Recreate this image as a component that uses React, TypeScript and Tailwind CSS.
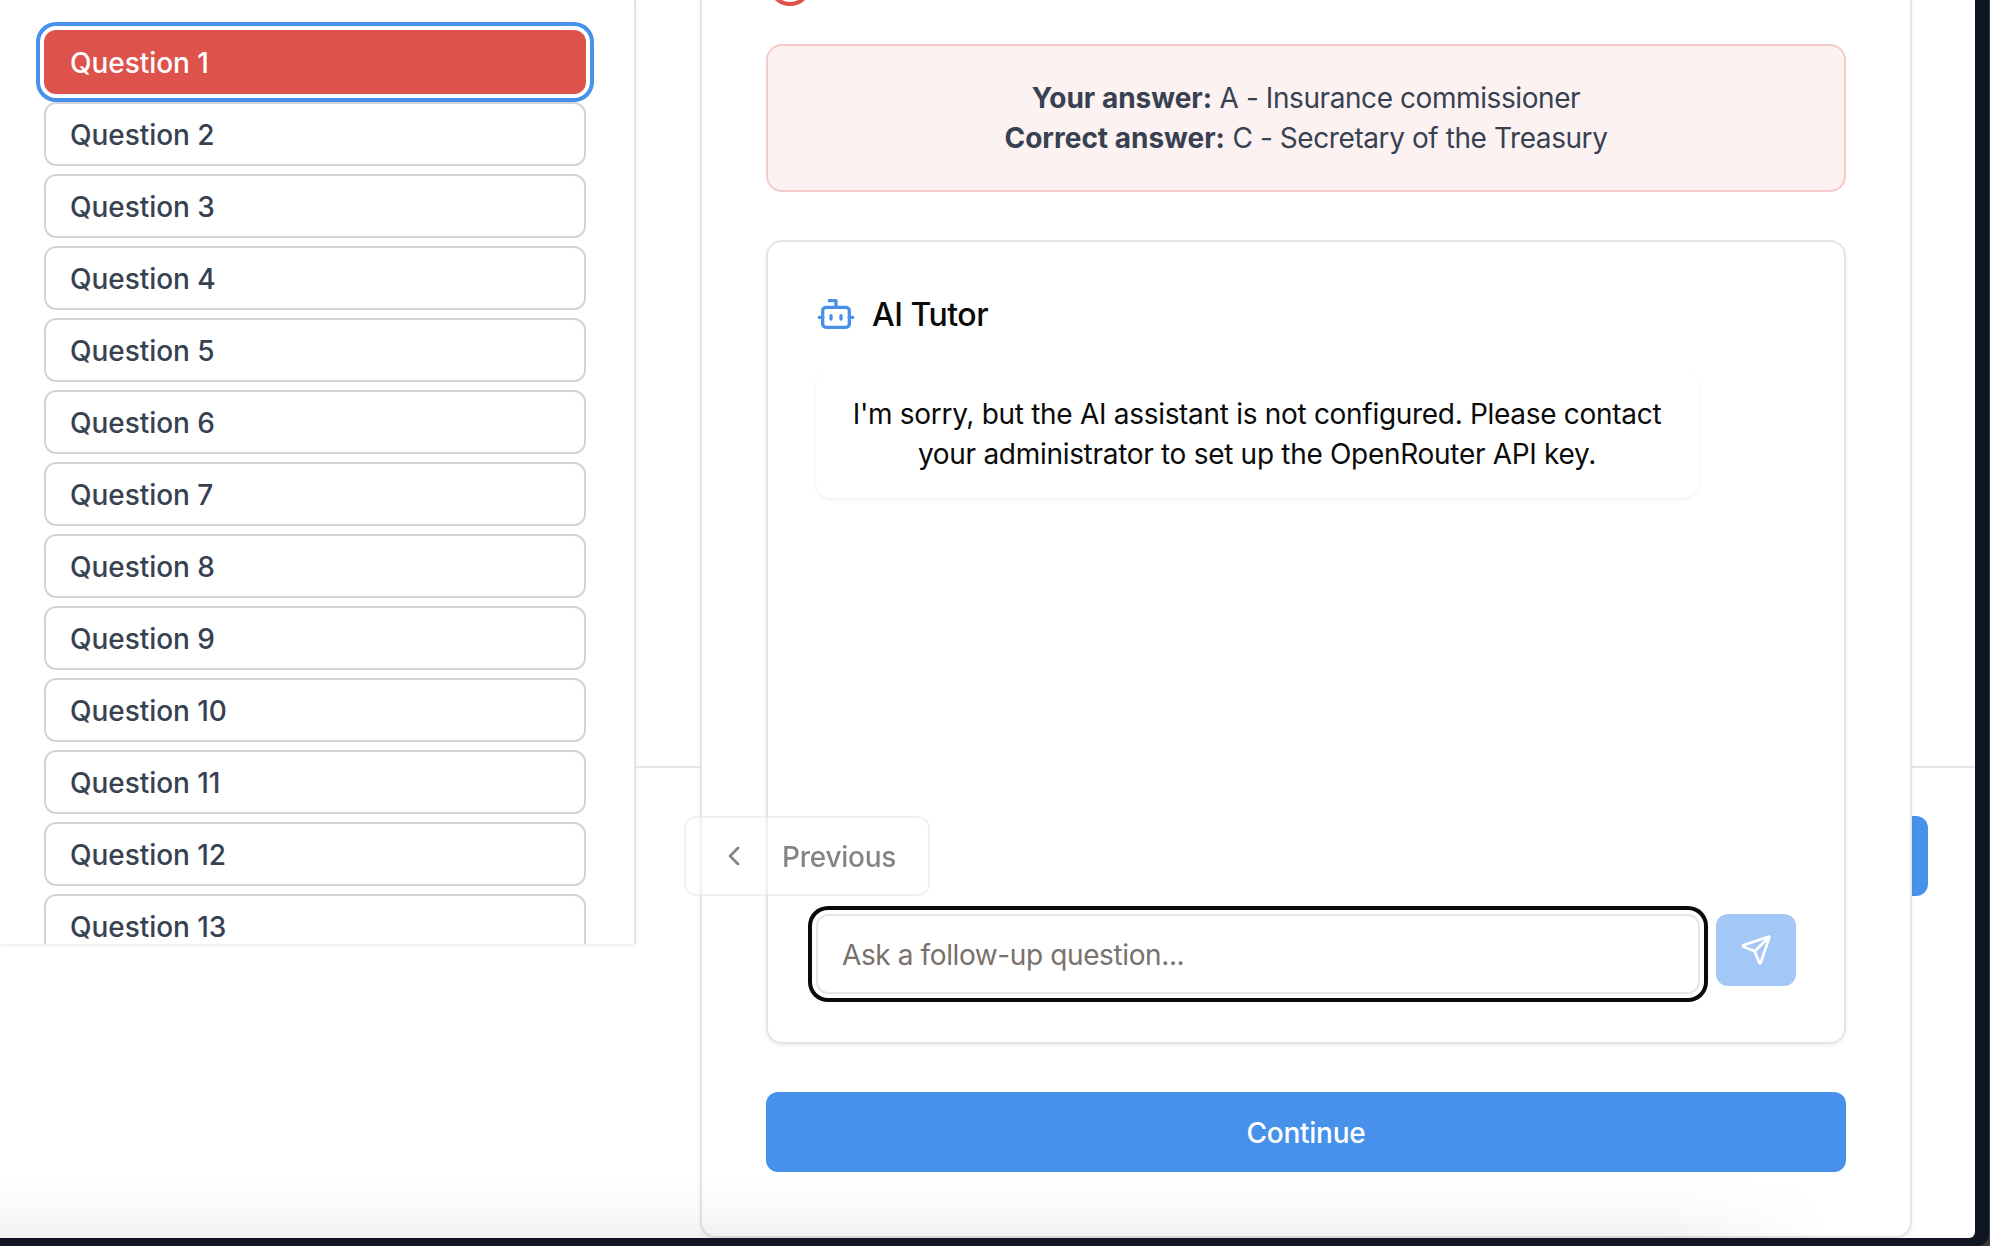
import { Bot, ChevronLeft, CircleX, Send } from "lucide-react";

const questions = Array.from({ length: 13 }, (_, i) => i + 1);

function Sidebar() {
  return (
    <aside className="h-[944px] w-[636px] shrink-0 overflow-hidden border-r-2 border-[#e5e5e5] bg-white pt-[30px] pr-12 pl-11 shadow-[0_2px_4px_rgba(0,0,0,0.07)]">
      <div className="flex flex-col gap-2">
        {questions.map((n) => (
          <button
            key={n}
            className={
              n === 1
                ? "h-16 shrink-0 rounded-xl bg-[#de524c] pt-px pl-[26px] text-left text-[28px] font-medium tracking-[-0.05px] text-white shadow-[0_0_0_4px_#ffffff,0_0_0_8px_#4791eb]"
                : "h-16 shrink-0 rounded-xl border-2 border-[#d1d5db] bg-white pt-px pl-6 text-left text-[28px] font-medium tracking-[-0.05px] text-[#374151]"
            }
          >
            Question {n}
          </button>
        ))}
      </div>
    </aside>
  );
}

function AnswerSummary() {
  return (
    <div className="rounded-2xl border-2 border-[#f7caca] bg-[#fdf2f2] p-8 text-center text-[28px] leading-10 tracking-[-0.42px] text-[#374151]">
      <p>
        <strong className="font-bold tracking-normal">Your answer:</strong> A - Insurance commissioner
      </p>
      <p>
        <strong className="font-bold tracking-normal">Correct answer:</strong> C - Secretary of the Treasury
      </p>
    </div>
  );
}

function Tutor() {
  return (
    <section className="mt-12 flex h-[804px] flex-col rounded-2xl border-2 border-[#e5e5e5] bg-white px-12 pt-12 pb-12 shadow-[0_2px_4px_rgba(0,0,0,0.06)]">
      <header className="flex h-12 items-center gap-4">
        <Bot className="size-10 text-[#4791eb]" />
        <h2 className="pt-0.5 text-[32px] leading-12 font-medium tracking-[-0.5px] text-[#0a0a0a]">AI Tutor</h2>
      </header>
      <div className="mt-8 w-[882px] rounded-2xl px-8 py-6 text-center text-[28px] leading-10 tracking-[-0.3px] text-[#0a0a0a] shadow-[0_2px_4px_rgba(0,0,0,0.05)]">
        I'm sorry, but the AI assistant is not configured. Please contact your administrator to set up the OpenRouter API key.
      </div>
      <div className="mt-auto flex items-start gap-4">
        <input
          placeholder="Ask a follow-up question..."
          className="h-20 w-[884px] rounded-xl border-2 border-[#e5e5e5] bg-white px-6 pt-0.5 text-[28px] tracking-[-0.39px] text-[#0a0a0a] shadow-[0_0_0_4px_#ffffff,0_0_0_8px_#0a0a0a] outline-none placeholder:text-[#78716c]"
        />
        <button className="flex h-[72px] w-20 items-center justify-center rounded-xl bg-[#a3c8f5] text-white">
          <Send className="size-8" />
        </button>
      </div>
    </section>
  );
}

function ResultPanel() {
  return (
    <div className="absolute -top-[42px] left-16 z-10 h-[1280px] w-[1212px] rounded-2xl border-2 border-[#e5e5e5] bg-white px-16 shadow-[0_2px_4px_rgba(0,0,0,0.06)]">
      <CircleX className="mb-9 size-12 text-[#de524c]" />
      <AnswerSummary />
      <Tutor />
      <button className="mt-12 h-20 w-full rounded-xl bg-[#4791eb] pt-px text-[28px] font-medium tracking-[-0.25px] text-white">
        Continue
      </button>
    </div>
  );
}

export default function App() {
  return (
    <div className="h-[1246px] w-[1990px] overflow-hidden bg-[#39393b] font-['Inter',sans-serif]">
      <div className="h-[1246px] w-[1989px] rounded-br-xl bg-[#0f1523]">
        <div className="relative flex h-[1238px] w-[1975px] overflow-hidden rounded-br-md bg-white">
          <Sidebar />
          <main className="relative flex flex-1 flex-col">
            <div className="h-[766px]" />
            <footer className="flex justify-between border-t-2 border-[#e5e5e5] pt-12 pr-[47px] pl-12">
              <button className="relative z-20 flex h-20 w-[246px] items-center gap-8 rounded-xl border-2 border-[#e5e5e5] bg-white px-8 text-[28px] font-medium tracking-[-0.25px] text-[#0a0a0a] opacity-50">
                <ChevronLeft className="size-8 shrink-0" />
                <span className="pt-px">Previous</span>
              </button>
              <button className="h-20 w-48 rounded-xl bg-[#4791eb]" aria-label="Next" />
            </footer>
            <ResultPanel />
          </main>
          <div className="pointer-events-none absolute bottom-0 left-0 z-30 h-[66px] w-[1830px] bg-[linear-gradient(to_top,rgba(0,0,0,0.06),rgba(0,0,0,0.022)_35%,transparent)] [mask-image:linear-gradient(to_right,black_91%,transparent)]" />
        </div>
      </div>
    </div>
  );
}
